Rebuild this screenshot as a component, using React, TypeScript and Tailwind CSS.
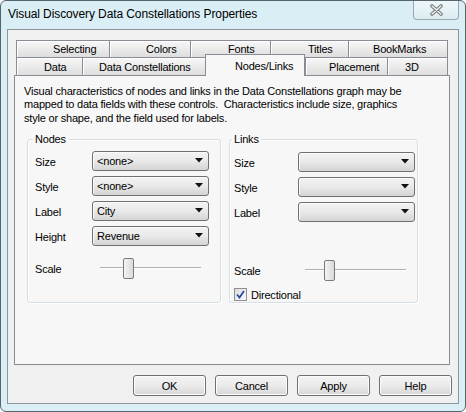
import React from 'react';

const tabsTop = [
  { label: 'Selecting', cls: 'w-[93px] pl-[36px]' },
  { label: 'Colors', cls: 'w-[81px] pl-[36px]' },
  { label: 'Fonts', cls: 'w-[80px] pl-[37px]' },
  { label: 'Titles', cls: 'w-[78px] pl-[37px]' },
  { label: 'BookMarks', cls: 'w-[100px] pl-[24px] border-r' },
];

const tabsBottom = [
  { label: 'Data', cls: 'w-[66px] pl-[27px]', active: false },
  { label: 'Data Constellations', cls: 'w-[123px] pl-[16px]', active: false },
  { label: 'Nodes/Links', cls: 'w-[100px] pl-[29px]', active: true },
  { label: 'Placement', cls: 'w-[82px] pl-[23px]', active: false },
  { label: '3D', cls: 'w-[61px] pl-[17px] border-r', active: false },
];

const Combo = ({ value }: { value?: string }) => (
  <div className="flex items-center h-[20px] w-[117px] rounded-[3px] border border-[#707070] bg-linear-to-b from-[#f3f3f3] via-[#e9e9e9] to-[#d4d4d4] pl-[4px] pr-[5px] shadow-[inset_1px_1px_0_#fafafa]">
    <span className="flex-1 pt-[1px]">{value}</span>
    <svg width="8" height="5" viewBox="0 0 8 5">
      <path d="M0 0h8L4 4.5z" fill="#111" />
    </svg>
  </div>
);

const Slider = ({ thumb }: { thumb: string }) => (
  <div className="relative flex items-center w-[101px] h-[21px]">
    <div className="w-full h-[2px] border-t border-[#b0b0b0] border-b border-b-white" />
    <div className={`absolute top-0 ${thumb} w-[11px] h-[21px] rounded-[2px] border border-[#7a7a7a] bg-linear-to-r from-[#f4f4f4] to-[#dadada]`} />
  </div>
);

const Row = ({ label, value, lw }: { label: string; value?: string; lw: string }) => (
  <div className="flex items-center">
    <span className={`${lw} pt-[3px]`}>{label}</span>
    <Combo value={value} />
  </div>
);

export default function App() {
  return (
    <div className="w-[466px] h-[412px] flex flex-col rounded-[6px] border border-[#56646c] bg-[#daeff5] px-[6px] pb-[7px] text-[11px] text-black font-['Liberation_Sans',Arial,sans-serif] select-none">
      {/* Title bar */}
      <div className="flex h-[28px] shrink-0">
        <span className="mt-[6px] ml-[1px] text-[12px] leading-[14px] tracking-[-0.1px]">
          Visual Discovery Data Constellations Properties
        </span>
        <div className="ml-auto w-[46px] h-[19px] flex items-center justify-center rounded-b-[4px] border border-t-0 border-[#9aa6ad] bg-linear-to-b from-[#eef8fb] to-[#dcecf1]">
          <svg width="15" height="12" viewBox="0 0 15 12">
            <path d="M3 2L12 10M12 2L3 10" stroke="#7a7a7a" strokeWidth="3.6" strokeLinecap="round" />
            <path d="M3 2L12 10M12 2L3 10" stroke="#f4f4f4" strokeWidth="1.4" strokeLinecap="round" />
          </svg>
        </div>
      </div>

      {/* Client area */}
      <div className="flex-1 flex flex-col border border-[#8d969c] bg-[#f0f0f0] pt-[10px] pl-[6px] pr-[6px] pb-[7px] tracking-[-0.2px]">
        <div className="flex flex-col flex-1 mr-[2px]">
          {/* Tab rows */}
          <div className="flex pl-[2px] h-[17px]">
            {tabsTop.map((t) => (
              <div
                key={t.label}
                className={`${t.cls} h-[17px] flex items-center pt-[1px] border-t border-l border-[#898c95] bg-linear-to-b from-[#f7f7f7] to-[#dedede] shadow-[inset_1px_1px_0_#ffffff] whitespace-nowrap`}
              >
                {t.label}
              </div>
            ))}
          </div>
          <div className="flex items-end pl-[2px] h-[18px]">
            {tabsBottom.map((t) =>
              t.active ? (
                <div
                  key={t.label}
                  className={`${t.cls} relative z-10 -mb-px h-[22px] flex items-start pt-[3px] border-t border-l border-r border-[#898c95] bg-[#f7f7f7] whitespace-nowrap`}
                >
                  {t.label}
                </div>
              ) : (
                <div
                  key={t.label}
                  className={`${t.cls} h-[18px] flex items-center pt-[2px] border-t border-l border-[#898c95] bg-linear-to-b from-[#f7f7f7] to-[#dedede] shadow-[inset_1px_1px_0_#ffffff] whitespace-nowrap`}
                >
                  {t.label}
                </div>
              )
            )}
          </div>

          {/* Tab panel */}
          <div className="flex-1 border border-[#898c95] bg-[#f7f7f7] pt-[9px] pl-[9px] pr-[10px]">
            <p className="leading-[13.33px]">
              Visual characteristics of nodes and links in the Data Constellations graph may be
              <br />
              mapped to data fields with these controls.&nbsp; Characteristics include size, graphics
              <br />
              style or shape, and the field used for labels.
            </p>

            <div className="flex gap-[8px] ml-[3px] mt-[8px]">
              <fieldset className="w-[194px] h-[170px] rounded-[3px] border border-[#d5dfe5] shadow-[inset_1px_1px_0_#fff,1px_1px_0_#fff] pl-[7px]">
                <legend className="leading-[13px] px-[2px] -ml-[2px]">Nodes</legend>
                <div className="flex flex-col gap-[5px] mt-[5px]">
                  <Row label="Size" value="<none>" lw="w-[57px]" />
                  <Row label="Style" value="<none>" lw="w-[57px]" />
                  <Row label="Label" value="City" lw="w-[57px]" />
                  <Row label="Height" value="Revenue" lw="w-[57px]" />
                </div>
                <div className="flex items-center mt-[12px]">
                  <span className="w-[65px] pt-[2px]">Scale</span>
                  <Slider thumb="left-[23px]" />
                </div>
              </fieldset>

              <fieldset className="w-[189px] h-[170px] rounded-[3px] border border-[#d5dfe5] shadow-[inset_1px_1px_0_#fff,1px_1px_0_#fff] pl-[4px]">
                <legend className="leading-[13px] px-[2px] -ml-[2px]">Links</legend>
                <div className="flex flex-col gap-[5px] mt-[6px]">
                  <Row label="Size" lw="w-[64px]" />
                  <Row label="Style" lw="w-[64px]" />
                  <Row label="Label" lw="w-[64px]" />
                </div>
                <div className="flex items-center mt-[38px]">
                  <span className="w-[71px] pt-[2px]">Scale</span>
                  <Slider thumb="left-[19px]" />
                </div>
                <label className="flex items-center gap-[4px] mt-[5px]">
                  <span className="w-[13px] h-[13px] flex items-center justify-center border border-[#8e8f8f] bg-linear-to-br from-[#dcdcdc] to-[#fbfbfb]">
                    <svg width="9" height="9" viewBox="0 0 9 9">
                      <path d="M1 4.5L3.5 7.5L8 1" stroke="#2a4a9e" strokeWidth="1.8" fill="none" />
                    </svg>
                  </span>
                  <span className="pt-[1px]">Directional</span>
                </label>
              </fieldset>
            </div>
          </div>
        </div>

        {/* Buttons */}
        <div className="flex justify-end gap-[9px] mt-[10px]">
          {['OK', 'Cancel', 'Apply', 'Help'].map((b) => (
            <button
              key={b}
              className="w-[73px] h-[21px] pt-[1px] rounded-[3px] border border-[#707070] bg-linear-to-b from-[#f3f3f3] via-[#ebebeb] to-[#d6d6d6] shadow-[inset_0_0_0_1px_#fcfcfc]"
            >
              {b}
            </button>
          ))}
        </div>
      </div>
    </div>
  );
}
